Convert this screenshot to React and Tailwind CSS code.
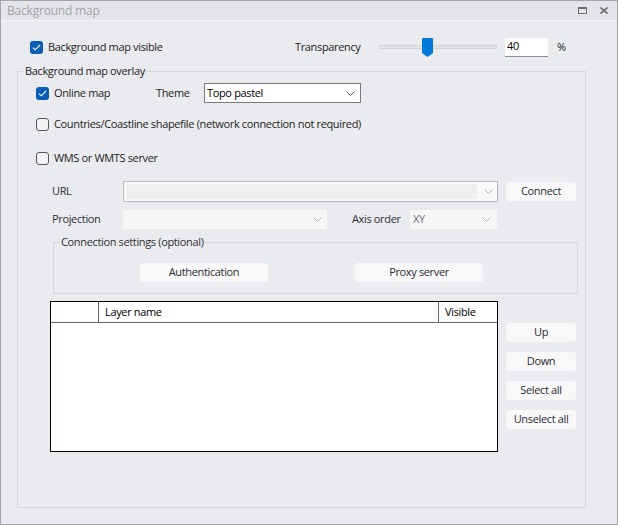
import React from 'react';

function Check({ checked }) {
  if (checked) {
    return (
      <span className="flex h-[13px] w-[13px] shrink-0 items-center justify-center rounded-[3px] bg-[#0b5cb5]">
        <svg width="9" height="7" viewBox="0 0 9 7">
          <path d="M1 3.6 L3.3 5.8 L8 1" fill="none" stroke="white" strokeWidth="1.1" />
        </svg>
      </span>
    );
  }
  return <span className="h-[13px] w-[13px] shrink-0 rounded-[3px] border border-[#55555c] bg-[#f3f3f5]" />;
}

function Chevron({ color = '#8a8a8f' }) {
  return (
    <svg width="9" height="5" viewBox="0 0 9 5">
      <path d="M0.5 0.5 L4.5 4.5 L8.5 0.5" fill="none" stroke={color} strokeWidth="1" />
    </svg>
  );
}

function Btn({ children, className = '' }) {
  return (
    <div className={`flex h-[19px] shrink-0 items-center justify-center rounded-[3px] bg-[#f8f8f9] text-[#2b2b33] ${className}`}>
      {children}
    </div>
  );
}

function CheckRow({ checked, label, className = '' }) {
  return (
    <div className={`flex shrink-0 items-center gap-[5px] ${className}`}>
      <Check checked={checked} />
      <span>{label}</span>
    </div>
  );
}

export default function App() {
  return (
    <div className="flex h-[525px] w-[618px] flex-col border border-[#a3a3ab] bg-[#eaebee] font-['Open_Sans',sans-serif] text-[11px] tracking-[-0.35px] text-[#1c1c22]">
      {/* title bar */}
      <div className="flex h-[20px] shrink-0 items-center justify-between border-b border-[#f4f4f6] bg-[#e4e5e9] pl-[6px] pr-[9px]">
        <span className="text-[12px] tracking-[-0.2px] text-[#a3a3ab]">Background map</span>
        <div className="flex items-center gap-[13px]">
          <div className="h-[7px] w-[9px] border border-t-2 border-[#6c6c76]" />
          <svg width="8" height="7" viewBox="0 0 8 7">
            <path d="M0.5 0.5 L7.5 6.5 M7.5 0.5 L0.5 6.5" stroke="#6c6c76" strokeWidth="1.6" />
          </svg>
        </div>
      </div>

      <div className="flex flex-col px-[16px]">
        {/* visible + transparency */}
        <div className="mt-[16px] flex h-[20px] items-center">
          <CheckRow checked label="Background map visible" className="ml-[13px] w-[265px]" />
          <span className="w-[84px] shrink-0">Transparency</span>
          <div className="relative h-[4px] w-[118px] shrink-0 border border-[#d2d2d6] bg-[#e3e3e6]">
            <svg className="absolute left-[42px] top-[-8px]" width="11" height="19" viewBox="0 0 11 19">
              <path d="M0 1 Q0 0 1 0 H10 Q11 0 11 1 V15 L5.5 19 L0 15 Z" fill="#0078d7" />
            </svg>
          </div>
          <div className="ml-[8px] flex h-[19px] w-[43px] shrink-0 items-center border-b border-[#8c8c92] bg-white pl-[2px] text-black">
            40
          </div>
          <span className="ml-[9px]">%</span>
        </div>

        {/* overlay group */}
        <div className="relative mt-[14px] h-[437px] w-[569px] border border-[#d5d6da]">
          <span className="absolute left-[6px] top-[-9px] bg-[#eaebee] px-[1px] leading-[16px]">Background map overlay</span>

          <div className="flex flex-col pl-[18px]">
            <div className="mt-[11px] flex h-[20px] items-center">
              <CheckRow checked label="Online map" className="w-[120px]" />
              <span className="w-[48px] shrink-0">Theme</span>
              <div className="flex h-[20px] w-[157px] shrink-0 items-center justify-between border border-[#7a7a80] bg-white pl-[2px] pr-[5px] text-black">
                <span>Topo pastel</span>
                <Chevron color="#606066" />
              </div>
            </div>

            <CheckRow label="Countries/Coastline shapefile (network connection not required)" className="mt-[11px] h-[20px]" />
            <CheckRow label="WMS or WMTS server" className="mt-[14px] h-[20px]" />

            <div className="mt-[13px] flex h-[21px] items-center">
              <span className="ml-[16px] w-[71px] shrink-0 text-[#2e2e38]">URL</span>
              <div className="flex h-[21px] w-[375px] shrink-0 border border-[#bcbcc0] bg-[#f9f9f9]">
                <div className="m-[2px] flex-1 bg-[#efeff0]" />
                <div className="flex w-[18px] items-center justify-center">
                  <Chevron color="#a8a8ad" />
                </div>
              </div>
              <Btn className="ml-[8px] w-[70px]">Connect</Btn>
            </div>

            <div className="mt-[8px] flex h-[19px] items-center">
              <span className="ml-[16px] w-[71px] shrink-0 text-[#2e2e38]">Projection</span>
              <div className="flex h-[19px] w-[204px] shrink-0 items-center justify-end bg-[#f7f7f8] pr-[5px]">
                <Chevron color="#b4b4b8" />
              </div>
              <span className="ml-[25px] w-[58px] shrink-0 text-[#2e2e38]">Axis order</span>
              <div className="flex h-[19px] w-[87px] shrink-0 items-center justify-between bg-[#f7f7f8] pl-[3px] pr-[6px] text-[#6e6e78]">
                <span>XY</span>
                <Chevron color="#b4b4b8" />
              </div>
            </div>

            {/* connection settings */}
            <div className="relative ml-[17px] mt-[13px] h-[52px] w-[525px] border border-[#d5d6da]">
              <span className="absolute left-[6px] top-[-9px] bg-[#eaebee] px-[1px] leading-[16px] text-[#2e2e38]">
                Connection settings (optional)
              </span>
              <div className="ml-[86px] mt-[20px] flex gap-[87px]">
                <Btn className="w-[128px]">Authentication</Btn>
                <Btn className="w-[128px]">Proxy server</Btn>
              </div>
            </div>

            {/* layers */}
            <div className="ml-[14px] mt-[7px] flex items-start">
              <div className="flex h-[151px] w-[448px] shrink-0 flex-col border border-black bg-white">
                <div className="flex h-[21px] border-b border-[#646468] text-black">
                  <div className="w-[48px] border-r border-[#646468]" />
                  <div className="flex flex-1 items-center border-r border-[#646468] pl-[6px]">Layer name</div>
                  <div className="flex w-[58px] items-center pl-[6px]">Visible</div>
                </div>
              </div>
              <div className="ml-[8px] mt-[22px] flex flex-col gap-[10px]">
                <Btn className="w-[70px]">Up</Btn>
                <Btn className="w-[70px]">Down</Btn>
                <Btn className="w-[70px]">Select all</Btn>
                <Btn className="w-[70px]">Unselect all</Btn>
              </div>
            </div>
          </div>
        </div>
      </div>
    </div>
  );
}
